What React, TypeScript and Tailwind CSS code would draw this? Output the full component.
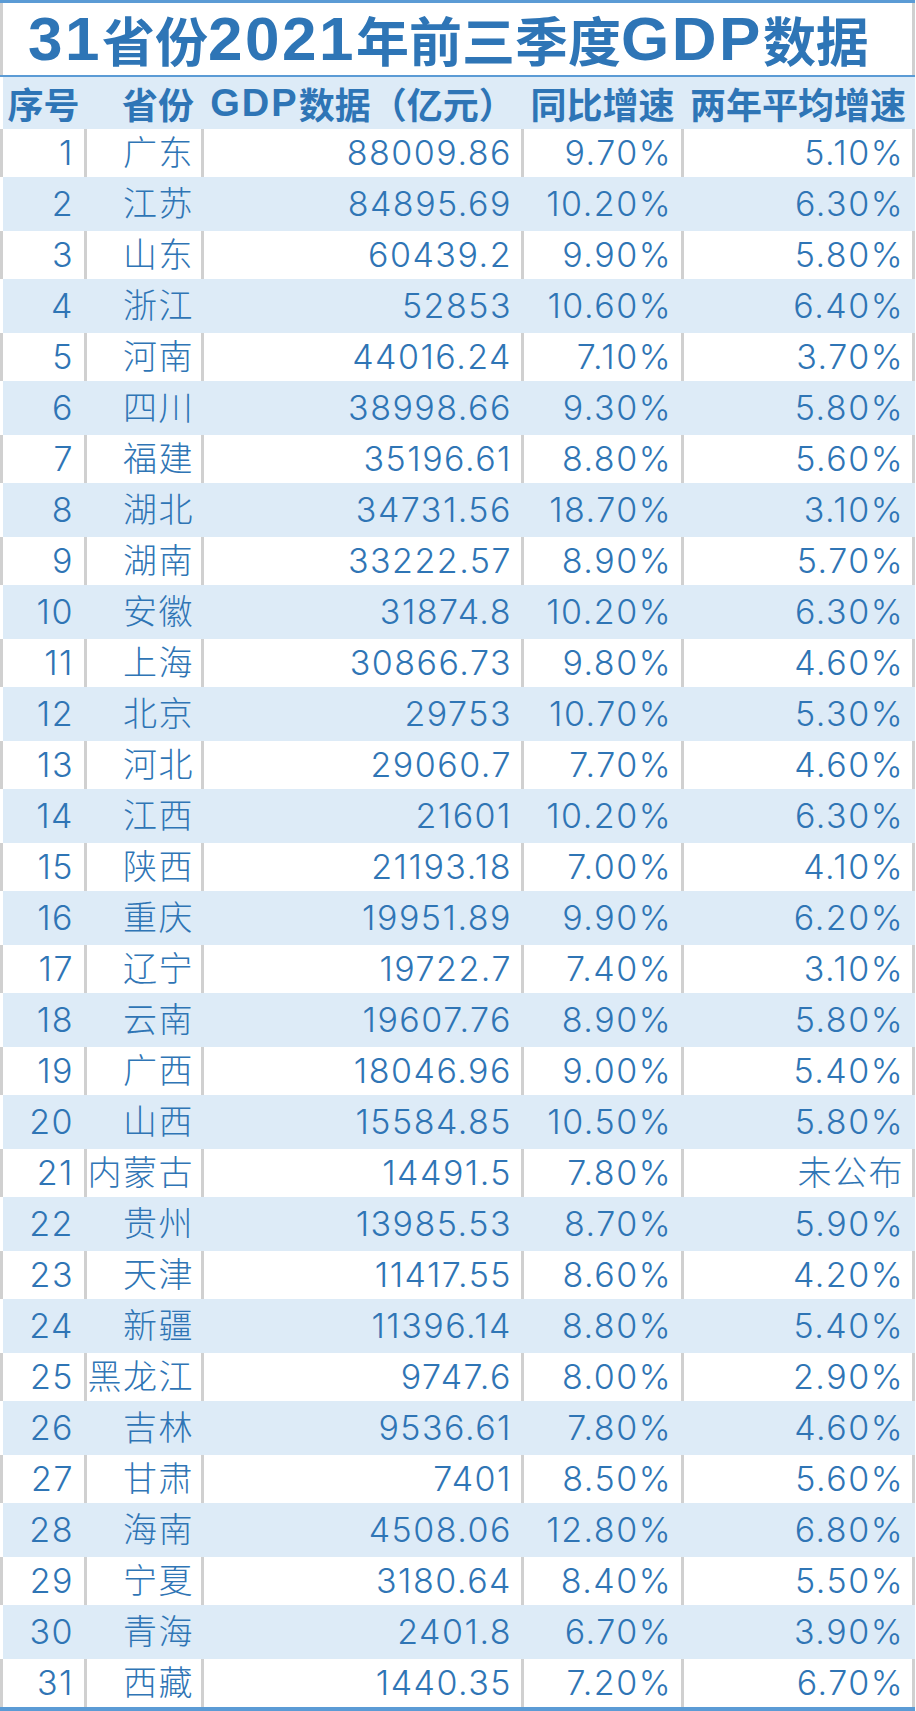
import React from "react";

type R = [string, string, string, string, string];

const rows: R[] = [
  ["1", "广东", "88009.86", "9.70%", "5.10%"],
  ["2", "江苏", "84895.69", "10.20%", "6.30%"],
  ["3", "山东", "60439.2", "9.90%", "5.80%"],
  ["4", "浙江", "52853", "10.60%", "6.40%"],
  ["5", "河南", "44016.24", "7.10%", "3.70%"],
  ["6", "四川", "38998.66", "9.30%", "5.80%"],
  ["7", "福建", "35196.61", "8.80%", "5.60%"],
  ["8", "湖北", "34731.56", "18.70%", "3.10%"],
  ["9", "湖南", "33222.57", "8.90%", "5.70%"],
  ["10", "安徽", "31874.8", "10.20%", "6.30%"],
  ["11", "上海", "30866.73", "9.80%", "4.60%"],
  ["12", "北京", "29753", "10.70%", "5.30%"],
  ["13", "河北", "29060.7", "7.70%", "4.60%"],
  ["14", "江西", "21601", "10.20%", "6.30%"],
  ["15", "陕西", "21193.18", "7.00%", "4.10%"],
  ["16", "重庆", "19951.89", "9.90%", "6.20%"],
  ["17", "辽宁", "19722.7", "7.40%", "3.10%"],
  ["18", "云南", "19607.76", "8.90%", "5.80%"],
  ["19", "广西", "18046.96", "9.00%", "5.40%"],
  ["20", "山西", "15584.85", "10.50%", "5.80%"],
  ["21", "内蒙古", "14491.5", "7.80%", "未公布"],
  ["22", "贵州", "13985.53", "8.70%", "5.90%"],
  ["23", "天津", "11417.55", "8.60%", "4.20%"],
  ["24", "新疆", "11396.14", "8.80%", "5.40%"],
  ["25", "黑龙江", "9747.6", "8.00%", "2.90%"],
  ["26", "吉林", "9536.61", "7.80%", "4.60%"],
  ["27", "甘肃", "7401", "8.50%", "5.60%"],
  ["28", "海南", "4508.06", "12.80%", "6.80%"],
  ["29", "宁夏", "3180.64", "8.40%", "5.50%"],
  ["30", "青海", "2401.8", "6.70%", "3.90%"],
  ["31", "西藏", "1440.35", "7.20%", "6.70%"],
];

function Cell({ w, pr, children }: { w: string; pr: string; children: React.ReactNode }) {
  return (
    <div className={`${w} ${pr} shrink-0 flex items-center justify-end whitespace-nowrap`}>
      {children}
    </div>
  );
}

function Row({ r, shaded }: { r: R; shaded: boolean }) {
  const sep = shaded ? "w-[3px] shrink-0 bg-[#ddebf7]" : "w-[3px] shrink-0 bg-[#d0d0d0]";
  return (
    <div className={`flex w-[916px] ${shaded ? "h-[54px]" : "h-[48px]"}`}>
      <div className={`w-[3px] shrink-0 ${shaded ? "bg-white" : "bg-[#d0d0d0]"}`} />
      <div className={`flex w-[912px] shrink-0 ${shaded ? "bg-[#ddebf7]" : "bg-white"}`}>
        <Cell w="w-[81px]" pr="pr-[10px]">{r[0]}</Cell>
        <div className={sep} />
        <Cell w="w-[114px]" pr="pr-[7px]">{r[1]}</Cell>
        <div className={sep} />
        <Cell w="w-[317px]" pr="pr-[9px]">{r[2]}</Cell>
        <div className={sep} />
        <Cell w="w-[157px]" pr="pr-[9px]">{r[3]}</Cell>
        <div className={sep} />
        <Cell w="w-[228px]" pr="pr-[8px]">{r[4]}</Cell>
        <div className={sep} />
      </div>
      <div className="w-[1px] shrink-0 bg-white" />
    </div>
  );
}

const cjkTitle = "text-[53px] font-['Noto_Sans_CJK_SC',sans-serif] tracking-normal";

export default function App() {
  return (
    <div className="w-[916px] h-[1711px] bg-white overflow-hidden">
      {/* top line */}
      <div className="h-[3px] w-[915px] bg-[#5b9bd5]" />
      {/* title */}
      <div className="flex h-[72px] w-[916px]">
        <div className="w-[3px] shrink-0 bg-[#d0d0d0]" />
        <div className="w-[909px] shrink-0 flex items-center justify-center pr-[18px] text-[#2e75b6] font-bold whitespace-nowrap font-['Liberation_Sans','Noto_Sans_CJK_SC',sans-serif] text-[62px] tracking-[2.5px] leading-none">
          <span>31</span>
          <span className={cjkTitle}>省份</span>
          <span>2021</span>
          <span className={cjkTitle}>年前三季度</span>
          <span>GDP</span>
          <span className={cjkTitle}>数据</span>
        </div>
        <div className="w-[3px] shrink-0 bg-[#d0d0d0]" />
        <div className="w-[1px] shrink-0 bg-white" />
      </div>
      {/* line under title */}
      <div className="h-[2px] w-[915px] bg-[#5b9bd5]" />
      {/* header */}
      <div className="flex w-[916px] h-[52px]">
        <div className="w-[3px] shrink-0 bg-white" />
        <div className="flex w-[912px] shrink-0 bg-[#ddebf7] text-[#2e75b6] font-bold whitespace-nowrap font-['Noto_Sans_CJK_SC',sans-serif] text-[36px] leading-none">
          <div className="w-[81px] shrink-0 flex items-center justify-center">序号</div>
          <div className="w-[3px] shrink-0" />
          <div className="w-[114px] shrink-0 flex items-center justify-end pr-[7px]">省份</div>
          <div className="w-[3px] shrink-0" />
          <div className="w-[317px] shrink-0 flex items-center justify-center">
            <span className="font-['Liberation_Sans',sans-serif] text-[38px] tracking-[2px]">GDP</span>
            <span>数据（亿元）</span>
          </div>
          <div className="w-[3px] shrink-0" />
          <div className="w-[157px] shrink-0 flex items-center justify-center">同比增速</div>
          <div className="w-[3px] shrink-0" />
          <div className="w-[228px] shrink-0 flex items-center justify-center">两年平均增速</div>
          <div className="w-[3px] shrink-0" />
        </div>
        <div className="w-[1px] shrink-0 bg-white" />
      </div>
      {/* rows */}
      <div className="text-[#2f75b5] font-light text-[34px] leading-none tracking-[1.5px] font-['Inter','Noto_Sans_CJK_SC',sans-serif]">
        {rows.map((r, i) => (
          <Row key={r[0]} r={r} shaded={i % 2 === 1} />
        ))}
      </div>
      {/* bottom line */}
      <div className="h-[4px] w-[915px] bg-[#5b9bd5]" />
    </div>
  );
}
